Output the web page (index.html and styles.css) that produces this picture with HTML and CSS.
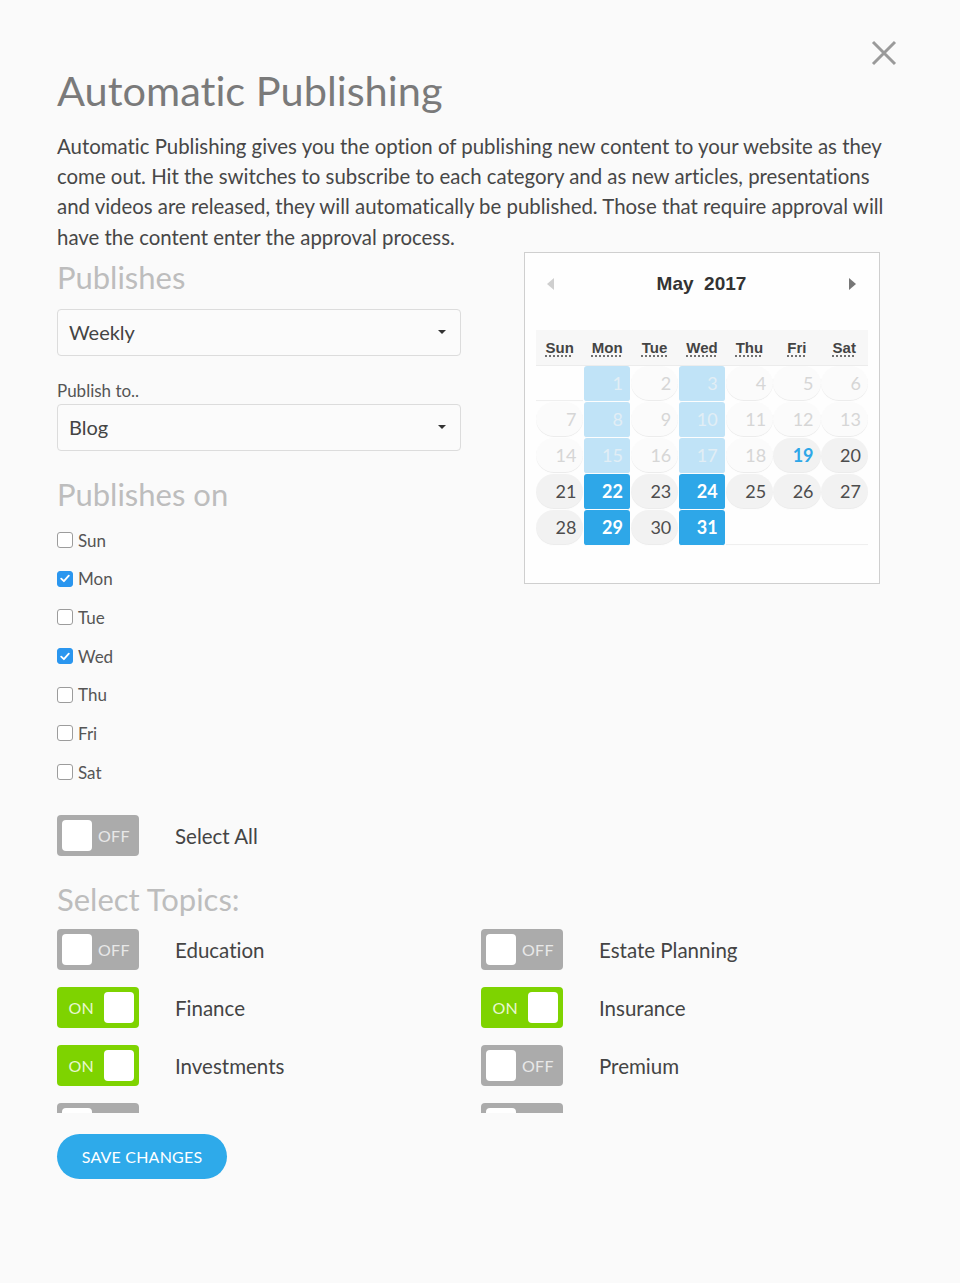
FILE: index.html
```html
<!DOCTYPE html>
<html lang="en">
<head>
<meta charset="utf-8">
<title>Automatic Publishing</title>
<link rel="stylesheet" href="styles.css">
</head>
<body>
<div class="modal">
  <button class="close" aria-label="Close">
    <svg width="26" height="26" viewBox="0 0 26 26"><path d="M2 2 L24 24 M24 2 L2 24" stroke="#9a9a9a" stroke-width="3" fill="none"/></svg>
  </button>
  <h1 class="title">Automatic Publishing</h1>
  <p class="intro">Automatic Publishing gives you the option of publishing new content to your website as they come out. Hit the switches to subscribe to each category and as new articles, presentations and videos are released, they will automatically be published. Those that require approval will have the content enter the approval process.</p>

  <div class="columns">
    <div class="left">
      <h2 class="section">Publishes</h2>
      <div class="select"><span>Weekly</span><i class="caret"></i></div>
      <div class="field-label">Publish to..</div>
      <div class="select select-2"><span>Blog</span><i class="caret"></i></div>

      <h2 class="section section-on">Publishes on</h2>
      <ul class="days">
        <li><span class="cb"></span>Sun</li>
        <li><span class="cb on"><svg width="10" height="9" viewBox="0 0 10 9"><path d="M1.2 4.6 L3.9 7.2 L8.8 1.6" stroke="#fff" stroke-width="1.8" fill="none" stroke-linecap="round" stroke-linejoin="round"/></svg></span>Mon</li>
        <li><span class="cb"></span>Tue</li>
        <li><span class="cb on"><svg width="10" height="9" viewBox="0 0 10 9"><path d="M1.2 4.6 L3.9 7.2 L8.8 1.6" stroke="#fff" stroke-width="1.8" fill="none" stroke-linecap="round" stroke-linejoin="round"/></svg></span>Wed</li>
        <li><span class="cb"></span>Thu</li>
        <li><span class="cb"></span>Fri</li>
        <li><span class="cb"></span>Sat</li>
      </ul>

      <div class="toggle-row select-all">
        <span class="toggle off"><span class="knob"></span><span class="tlabel">OFF</span></span>
        <span class="tname">Select All</span>
      </div>
    </div>

    <div class="right">
      <div class="calendar">
        <div class="cal-head">
          <span class="arrow arrow-left"></span>
          <span class="month">May&nbsp; 2017</span>
          <span class="arrow arrow-right"></span>
        </div>
        <div class="cal-grid">
          <div class="dow"><abbr>Sun</abbr></div>
          <div class="dow"><abbr>Mon</abbr></div>
          <div class="dow"><abbr>Tue</abbr></div>
          <div class="dow"><abbr>Wed</abbr></div>
          <div class="dow"><abbr>Thu</abbr></div>
          <div class="dow"><abbr>Fri</abbr></div>
          <div class="dow"><abbr>Sat</abbr></div>

          <div class="day blank"></div>
          <div class="day past sel">1</div>
          <div class="day past">2</div>
          <div class="day past sel">3</div>
          <div class="day past">4</div>
          <div class="day past">5</div>
          <div class="day past">6</div>

          <div class="day past">7</div>
          <div class="day past sel">8</div>
          <div class="day past">9</div>
          <div class="day past sel">10</div>
          <div class="day past">11</div>
          <div class="day past">12</div>
          <div class="day past">13</div>

          <div class="day past">14</div>
          <div class="day past sel">15</div>
          <div class="day past">16</div>
          <div class="day past sel">17</div>
          <div class="day past">18</div>
          <div class="day today">19</div>
          <div class="day">20</div>

          <div class="day">21</div>
          <div class="day sel">22</div>
          <div class="day">23</div>
          <div class="day sel">24</div>
          <div class="day">25</div>
          <div class="day">26</div>
          <div class="day">27</div>

          <div class="day">28</div>
          <div class="day sel">29</div>
          <div class="day">30</div>
          <div class="day sel">31</div>
          <div class="day blank"></div>
          <div class="day blank"></div>
          <div class="day blank"></div>
        </div>
      </div>
    </div>
  </div>

  <h2 class="section section-topics">Select Topics:</h2>
  <div class="topics">
    <div class="toggle-row"><span class="toggle off"><span class="knob"></span><span class="tlabel">OFF</span></span><span class="tname">Education</span></div>
    <div class="toggle-row"><span class="toggle off"><span class="knob"></span><span class="tlabel">OFF</span></span><span class="tname">Estate Planning</span></div>
    <div class="toggle-row"><span class="toggle on"><span class="tlabel">ON</span><span class="knob"></span></span><span class="tname">Finance</span></div>
    <div class="toggle-row"><span class="toggle on"><span class="tlabel">ON</span><span class="knob"></span></span><span class="tname">Insurance</span></div>
    <div class="toggle-row"><span class="toggle on"><span class="tlabel">ON</span><span class="knob"></span></span><span class="tname">Investments</span></div>
    <div class="toggle-row"><span class="toggle off"><span class="knob"></span><span class="tlabel">OFF</span></span><span class="tname">Premium</span></div>
    <div class="toggle-row"><span class="toggle off"><span class="knob"></span></span></div>
    <div class="toggle-row"><span class="toggle off"><span class="knob"></span></span></div>
  </div>

  <button class="save">SAVE CHANGES</button>
</div>
</body>
</html>
```

FILE: styles.css
```css
* { box-sizing: border-box; }

html, body {
  margin: 0;
  padding: 0;
  background: #fafafa;
}

body {
  font-family: Lato, "Open Sans", "Liberation Sans", sans-serif;
  font-variant-ligatures: no-common-ligatures;
  color: #444;
}

.modal {
  position: relative;
  width: 960px;
  min-height: 1283px;
  padding: 64px 57px 40px 57px;
}

.close {
  position: absolute;
  top: 40px;
  left: 871px;
  width: 26px;
  height: 26px;
  padding: 0;
  border: 0;
  background: none;
  cursor: pointer;
}
.close svg { display: block; }

.title {
  margin: 0;
  font-size: 41.5px;
  line-height: 52px;
  font-weight: 400;
  color: #7a7a7a;
}

.intro {
  margin: 15px 0 0 0;
  font-size: 20.4px;
  line-height: 30.2px;
  color: #474747;
  width: 846px;
}

.columns {
  display: flex;
  gap: 63px;
}

.left {
  width: 404px;
  flex: none;
}

.right {
  width: 356px;
  flex: none;
}

.section {
  margin: 7px 0 0 0;
  font-size: 31px;
  line-height: 36px;
  font-weight: 400;
  color: #bdbdbd;
}

.select {
  margin-top: 14px;
  height: 47px;
  border: 1px solid #dcdcdc;
  border-radius: 4px;
  background: #fbfbfb;
  display: flex;
  align-items: center;
  justify-content: space-between;
  padding: 0 14px 0 11px;
  font-size: 20px;
  color: #444;
}
.select-2 { margin-top: 3px; }

.caret {
  width: 0;
  height: 0;
  border-left: 4px solid transparent;
  border-right: 4px solid transparent;
  border-top: 4px solid #333;
}

.field-label {
  margin-top: 25px;
  font-size: 17px;
  line-height: 20px;
  color: #555;
}

.section-on { margin-top: 25px; }

.days {
  list-style: none;
  margin: 9px 0 0 0;
  padding: 0;
}
.days li {
  height: 38.67px;
  display: flex;
  align-items: center;
  font-size: 17px;
  color: #555;
}

.cb {
  width: 16px;
  height: 16px;
  margin-right: 5px;
  border: 1px solid #9c9c9c;
  border-radius: 3px;
  background: #fff;
  display: flex;
  align-items: center;
  justify-content: center;
}
.cb.on {
  background: #2a96ef;
  border-color: #2a96ef;
}
.cb svg { display: block; }

.toggle-row {
  display: flex;
  align-items: center;
  height: 41px;
}
.select-all { margin-top: 24px; }

.toggle {
  width: 82px;
  height: 41px;
  flex: none;
  border-radius: 4px;
  display: flex;
  align-items: center;
  padding: 0 5px;
  gap: 6px;
}
.toggle.off { background: #ababab; }
.toggle.on { background: #7ed300; justify-content: flex-end; gap: 10px; }

.knob {
  width: 30px;
  height: 31px;
  border-radius: 4px;
  background: #fff;
  flex: none;
}

.tlabel {
  font-size: 16px;
  color: #e8e8e8;
  letter-spacing: 0.3px;
}
.toggle.on .tlabel { color: #e9f8d2; }

.tname {
  margin-left: 36px;
  font-size: 20.5px;
  color: #444;
}

.section-topics { margin-top: 25px; }

.topics {
  margin-top: 12px;
  display: grid;
  grid-template-columns: 424px 424px;
  row-gap: 17px;
  max-height: 184px;
  overflow: hidden;
}

.save {
  margin-top: 21px;
  width: 170px;
  height: 45px;
  border: 0;
  border-radius: 23px;
  background: #2eaaea;
  color: #fff;
  font-family: Lato, "Open Sans", sans-serif;
  font-size: 16px;
  letter-spacing: 0.2px;
  padding: 0;
}

/* Calendar */
.calendar {
  width: 356px;
  height: 332px;
  border: 1px solid #cfcfcf;
  background: #fefefe;
  padding: 0 11px;
}

.cal-head {
  height: 77px;
  display: flex;
  align-items: center;
  justify-content: space-between;
  padding: 0 12px 15px 11px;
}

.month {
  font-family: "Liberation Sans", Arial, sans-serif;
  font-weight: 700;
  font-size: 19px;
  color: #333;
}

.arrow {
  width: 0;
  height: 0;
  border-top: 6px solid transparent;
  border-bottom: 6px solid transparent;
}
.arrow-left { border-right: 7px solid #cfcfcf; }
.arrow-right { border-left: 7px solid #777; }

.cal-grid {
  display: grid;
  grid-template-columns: repeat(7, 1fr);
  width: 332px;
}

.dow {
  height: 36px;
  background: #f7f7f7;
  display: flex;
  align-items: center;
  justify-content: center;
  border-bottom: 1px solid #ececec;
  font-family: "Liberation Sans", Arial, sans-serif;
  font-weight: 700;
  font-size: 15px;
  color: #444;
}
.dow abbr {
  text-decoration: underline dotted;
  text-underline-offset: 3px;
}

.day {
  height: 36px;
  display: flex;
  align-items: center;
  justify-content: flex-end;
  padding-right: 7px;
  font-size: 18px;
  color: #4d4d4d;
  background: #f2f2f2;
  border-radius: 18px;
  border-bottom: 1px solid #fdfdfd;
  box-shadow: inset 0 -1px 0 #ececec;
}
.day.past { color: #d6d6d6; background: #fbfbfb; }
.day.blank { background: transparent; border-radius: 0; box-shadow: inset 0 -1px 0 #efefef; }
.day.sel {
  background: #2ea7e8;
  color: #fff;
  font-weight: 700;
  border-radius: 3px;
  margin: 0 1px;
  box-shadow: none;
}
.day.past.sel {
  background: #c0e3f7;
  color: #e2eef5;
  font-weight: 400;
}
.day.today {
  color: #2ea7e8;
  font-weight: 700;
}
```
